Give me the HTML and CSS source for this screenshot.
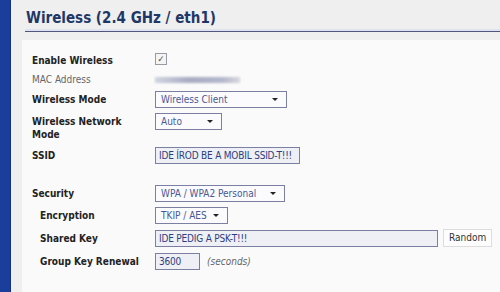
FILE: index.html
```html
<!DOCTYPE html>
<html lang="hu">
  <head>
    <meta charset="UTF-8" />
    <title>Wireless (2.4 GHz / eth1)</title>
    <link rel="stylesheet" href="styles.css">
  </head>
  <body>
    <div class="sidebar"></div>

    <div class="content">
      <h1 class="title">Wireless (2.4 GHz / eth1)</h1>

      <div class="panel">
        <!-- basic settings -->
        <div class="row row-check">
          <label class="label">Enable Wireless</label>
          <span class="checkbox">&#10003;</span>
        </div>
        <div class="row row-mac">
          <span class="label label-plain">MAC Address</span>
          <span class="mac-blur"></span>
        </div>
        <div class="row">
          <label class="label">Wireless Mode</label>
          <span class="select" style="width: 132px">Wireless Client</span>
        </div>
        <div class="row row-tall">
          <label class="label">Wireless Network Mode</label>
          <span class="select" style="width: 67px">Auto</span>
        </div>
        <div class="row row-gap">
          <label class="label">SSID</label>
          <span class="input" style="width: 145px">IDE ÍROD BE A MOBIL SSID-T!!!</span>
        </div>

        <!-- security -->
        <div class="row">
          <label class="label">Security</label>
          <span class="select" style="width: 130px">WPA / WPA2 Personal</span>
        </div>
        <div class="row sub">
          <label class="label">Encryption</label>
          <span class="select" style="width: 73px">TKIP / AES</span>
        </div>
        <div class="row sub">
          <label class="label">Shared Key</label>
          <span class="input" style="width: 283px">IDE PEDIG A PSK-T!!!</span>
          <span class="button">Random</span>
        </div>
        <div class="row sub">
          <label class="label">Group Key Renewal</label>
          <span class="input" style="width: 45px">3600</span>
          <span class="hint">(seconds)</span>
        </div>
      </div>
    </div>
  </body>
</html>
```

FILE: styles.css
```css
body {
  margin: 0;
  padding: 0;
  background-color: #efefef;
  font-family: "DejaVu Sans Condensed", "DejaVu Sans", sans-serif;
  font-stretch: condensed;
  display: flex;
  height: 292px;
  overflow: hidden;
}

.sidebar {
  width: 11px;
  flex-shrink: 0;
  background-color: #1b3e9c;
  border-right: 1px solid #15307c;
  box-sizing: border-box;
}

.content {
  flex: 1;
  display: flex;
  flex-direction: column;
  padding-left: 11px;
}

.title {
  margin: 0 0 0 3px;
  padding: 9px 0 4px 1px;
  font-size: 15px;
  font-weight: bold;
  color: #1f3766;
  border-bottom: 1px solid #50557e;
  box-shadow: 0 -2px 0 #dfe3f0 inset;
  line-height: 18px;
}

.panel {
  flex: 1;
  margin-top: 8px;
  background-color: #fafafa;
  padding: 14px 0 0 10px;
}

.row {
  display: flex;
  align-items: flex-start;
  margin-bottom: 5px;
  font-size: 10px;
}

.label {
  width: 123px;
  flex-shrink: 0;
  padding-top: 2px;
  line-height: 13px;
  font-weight: bold;
  color: #222;
}

.label-plain {
  font-weight: normal;
  color: #666;
}

.row-check {
  margin-bottom: 6px;
}

.row-check .label,
.row-mac .label {
  padding-top: 0;
}

.row-tall {
  margin-bottom: 6px;
}

.row-tall .label {
  width: 110px;
  margin-right: 13px;
}

.row-gap {
  margin-bottom: 21px;
}

.sub .label {
  width: 115px;
  padding-left: 8px;
}

.sub:nth-last-child(2),
.sub:nth-last-child(3) {
  margin-bottom: 6px;
}

.checkbox {
  width: 10px;
  height: 10px;
  margin-top: -1px;
  border: 1px solid #9a9aa4;
  background: #f4f4f4;
  font-size: 9px;
  line-height: 10px;
  text-align: center;
  color: #444;
}

.mac-blur {
  width: 85px;
  height: 6px;
  margin-top: 4px;
  background: linear-gradient(to right, #d0d4e0, #a8acc4 40%, #b4b8cc 80%, #d8d8e0);
  filter: blur(0.8px);
}

.select,
.input {
  position: relative;
  box-sizing: border-box;
  height: 17px;
  padding: 0 5px;
  line-height: 15px;
  border: 1px solid #7b80a3;
  font-size: 10px;
  color: #4a5894;
  white-space: nowrap;
  overflow: hidden;
}

.select {
  background-color: #fbfbfd;
}

.select::after {
  content: "";
  position: absolute;
  right: 8px;
  top: 6px;
  border-left: 3px solid transparent;
  border-right: 3px solid transparent;
  border-top: 3px solid #222;
}

.input {
  padding: 0 3px;
  background-color: #eef0f5;
  color: #2d3d80;
  letter-spacing: -0.2px;
}

.button {
  margin-left: 5px;
  box-sizing: border-box;
  height: 18px;
  margin-top: -1px;
  padding: 0 5px;
  line-height: 16px;
  border: 1px solid #ddd;
  background: #fdfdfd;
  font-size: 10px;
  color: #333;
}

.hint {
  margin-left: 7px;
  line-height: 17px;
  font-style: italic;
  color: #666;
}
```
